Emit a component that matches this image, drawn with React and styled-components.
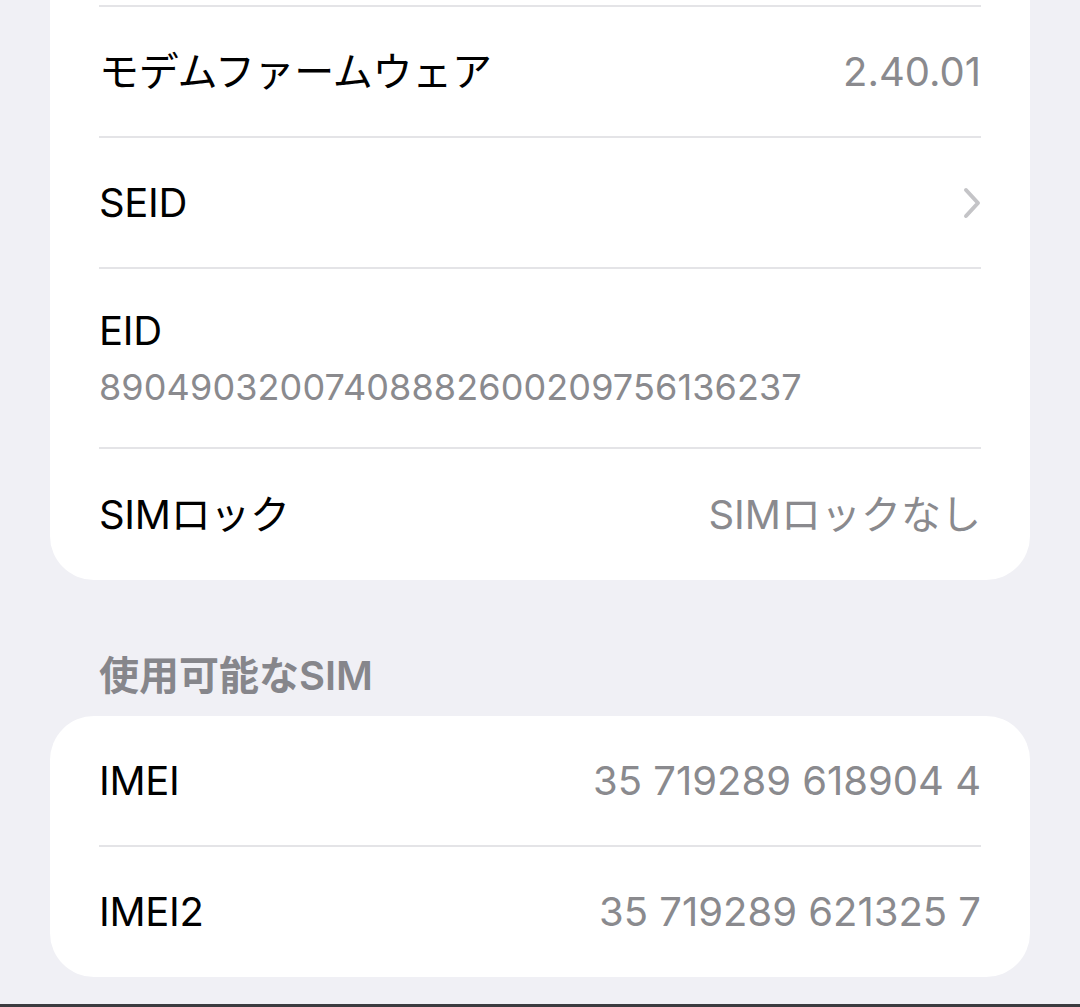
import React from 'react'
import styled, { createGlobalStyle } from 'styled-components'

const Colors = {
  bg: '#f0f0f5',
  card: '#ffffff',
  label: '#000000',
  secondary: '#8a8a8e',
  separator: '#e4e4e7',
  chevron: '#c4c4c7',
  edge: '#3b3b3f',
}

const GlobalStyle = createGlobalStyle`
  html, body {
    margin: 0;
    padding: 0;
    background: ${Colors.bg};
  }
  body {
    font-family: Inter, "Noto Sans CJK JP", sans-serif;
    -webkit-font-smoothing: antialiased;
  }
`

const Screen = styled.div`
  height: 1007px;
  overflow: hidden;
  display: flex;
  flex-direction: column;
  background: ${Colors.bg};
`

const Card = styled.ul`
  list-style: none;
  margin: 0 50px;
  padding: ${p => (p.$continued ? '5px 0 0' : '0')};
  background: ${Colors.card};
  border-radius: ${p => (p.$continued ? '0 0 44px 44px' : '44px')};
  overflow: hidden;
`

const Row = styled.li`
  padding: 0 49px;
`

const RowInner = styled.div`
  box-sizing: border-box;
  height: ${p => p.$height}px;
  border-top: ${p => (p.$divider ? `2px solid ${Colors.separator}` : 'none')};
  display: flex;
  align-items: center;
  justify-content: space-between;
  gap: 24px;
`

const Stack = styled(RowInner)`
  flex-direction: column;
  align-items: flex-start;
  justify-content: center;
  gap: 10px;
`

const Label = styled.span`
  font-size: 40px;
  line-height: 48px;
  color: ${Colors.label};
  white-space: nowrap;
  letter-spacing: -0.3px;
`

const Value = styled.span`
  font-size: 40px;
  line-height: 48px;
  color: ${Colors.secondary};
  white-space: nowrap;
`

const SubValue = styled.span`
  font-size: 36px;
  line-height: 44px;
  color: ${Colors.secondary};
  letter-spacing: 0.1px;
`

const SectionHeader = styled.h2`
  margin: 72px 0 16px;
  padding-left: 99px;
  font-size: 40px;
  line-height: 48px;
  font-weight: 600;
  color: #86868b;
`

const BottomEdge = styled.div`
  margin-top: auto;
  height: 3px;
  background: ${Colors.edge};
`

function Chevron() {
  return (
    <svg width="18" height="32" viewBox="0 0 18 32" aria-hidden="true">
      <path
        d="M3 3 L15 16 L3 29"
        fill="none"
        stroke={Colors.chevron}
        strokeWidth="4"
        strokeLinecap="round"
        strokeLinejoin="round"
      />
    </svg>
  )
}

function InfoRow({ label, value, height = 131, divider = true, chevron }) {
  return (
    <Row>
      <RowInner $height={height} $divider={divider}>
        <Label>{label}</Label>
        {value && <Value>{value}</Value>}
        {chevron && <Chevron />}
      </RowInner>
    </Row>
  )
}

export default function App() {
  return (
    <Screen>
      <GlobalStyle />
      <Card $continued>
        <InfoRow label="モデムファームウェア" value="2.40.01" />
        <InfoRow label="SEID" chevron />
        <Row>
          <Stack $height={180} $divider>
            <Label>EID</Label>
            <SubValue>89049032007408882600209756136237</SubValue>
          </Stack>
        </Row>
        <InfoRow label="SIMロック" value="SIMロックなし" height={133} />
      </Card>

      <SectionHeader>使用可能なSIM</SectionHeader>

      <Card>
        <InfoRow label="IMEI" value="35 719289 618904 4" height={129} divider={false} />
        <InfoRow label="IMEI2" value="35 719289 621325 7" height={132} />
      </Card>

      <BottomEdge />
    </Screen>
  )
}
